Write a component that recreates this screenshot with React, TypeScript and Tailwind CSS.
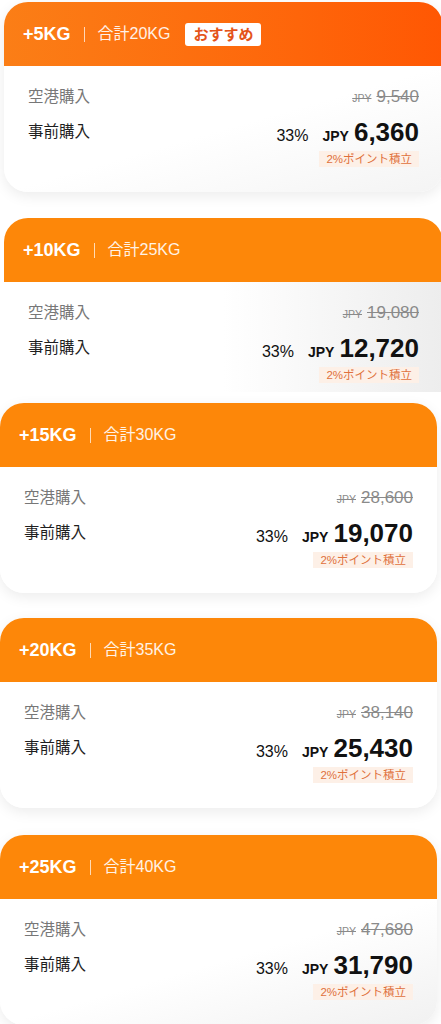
import React from 'react'

type Plan = {
  add: number
  total: number
  old: string
  price: string
  recommended?: boolean
}

const plans: Plan[] = [
  { add: 5, total: 20, old: '9,540', price: '6,360', recommended: true },
  { add: 10, total: 25, old: '19,080', price: '12,720' },
  { add: 15, total: 30, old: '28,600', price: '19,070' },
  { add: 20, total: 35, old: '38,140', price: '25,430' },
  { add: 25, total: 40, old: '47,680', price: '31,790' },
]

const font = { fontFamily: '"Liberation Sans", "Noto Sans CJK JP", sans-serif' }

function PlanCard({
  plan,
  className,
  headerClass,
  bodyClass,
  cut,
}: {
  plan: Plan
  className: string
  headerClass: string
  bodyClass: string
  cut?: boolean
}) {
  return (
    <div
      className={`${className} shrink-0 overflow-hidden ${
        cut ? 'rounded-t-[24px] h-[174px]' : 'rounded-[24px] shadow-[0_4px_14px_rgba(0,0,0,0.08)]'
      }`}
    >
      {/* Header */}
      <div className={`flex h-[64px] items-center pl-[19px] text-white ${headerClass}`}>
        <span className="text-[18px] font-bold">+{plan.add}KG</span>
        <span className="mx-[13px] h-[15px] w-px bg-white/70" />
        <span className="text-[16px] text-white/90">合計{plan.total}KG</span>
        {plan.recommended && (
          <span className="ml-[15px] rounded-[3px] bg-white px-[8px] text-[15px] font-bold leading-[23px] text-[#e4541a]">
            おすすめ
          </span>
        )}
      </div>

      {/* Body */}
      <div className={`px-6 pt-[19px] pb-[25px] ${bodyClass}`}>
        <div className="flex h-[24px] items-center justify-between">
          <span className="text-[15.5px] text-[#777]">空港購入</span>
          <span className="flex items-baseline text-[#8a8a8a] line-through">
            <span className="mr-[5px] text-[10.5px]">JPY</span>
            <span className="text-[17px]">{plan.old}</span>
          </span>
        </div>
        <div className="mt-[7px] flex h-[32px] items-center justify-between">
          <span className="text-[15.5px] text-[#1f1f1f]">事前購入</span>
          <span className="flex items-baseline text-[#111]">
            <span className="mr-[14px] text-[16px]">33%</span>
            <span className="mr-[5px] text-[14px] font-bold">JPY</span>
            <span className="text-[26px] font-bold leading-[32px]">{plan.price}</span>
          </span>
        </div>
        <div className="mt-[3px] flex justify-end">
          <span className="bg-[#fdf0e7] px-[7px] text-[11.5px] leading-[16px] text-[#e0703c]">
            2%ポイント積立
          </span>
        </div>
      </div>
    </div>
  )
}

export default function App() {
  return (
    <div className="flex h-[1024px] w-[441px] flex-col overflow-hidden bg-white" style={font}>
      <PlanCard
        plan={plans[0]}
        className="mt-[2px] ml-1 w-[439px]"
        headerClass="bg-gradient-to-r from-[#fb7e16] to-[#ff5703]"
        bodyClass="bg-gradient-to-br from-white via-white to-[#f4f4f4]"
      />
      <PlanCard
        plan={plans[1]}
        cut
        className="mt-[26px] ml-1 w-[439px]"
        headerClass="bg-[#fd8709]"
        bodyClass="bg-gradient-to-r from-white via-white to-[#ededed]"
      />
      <PlanCard
        plan={plans[2]}
        className="mt-[11px] w-[437px]"
        headerClass="bg-[#fd8709]"
        bodyClass="bg-white"
      />
      <PlanCard
        plan={plans[3]}
        className="mt-[25px] w-[437px]"
        headerClass="bg-[#fd8709]"
        bodyClass="bg-white"
      />
      <PlanCard
        plan={plans[4]}
        className="mt-[27px] w-[437px]"
        headerClass="bg-[#fd8709]"
        bodyClass="bg-gradient-to-br from-white via-white to-[#f1f1f1]"
      />
    </div>
  )
}
